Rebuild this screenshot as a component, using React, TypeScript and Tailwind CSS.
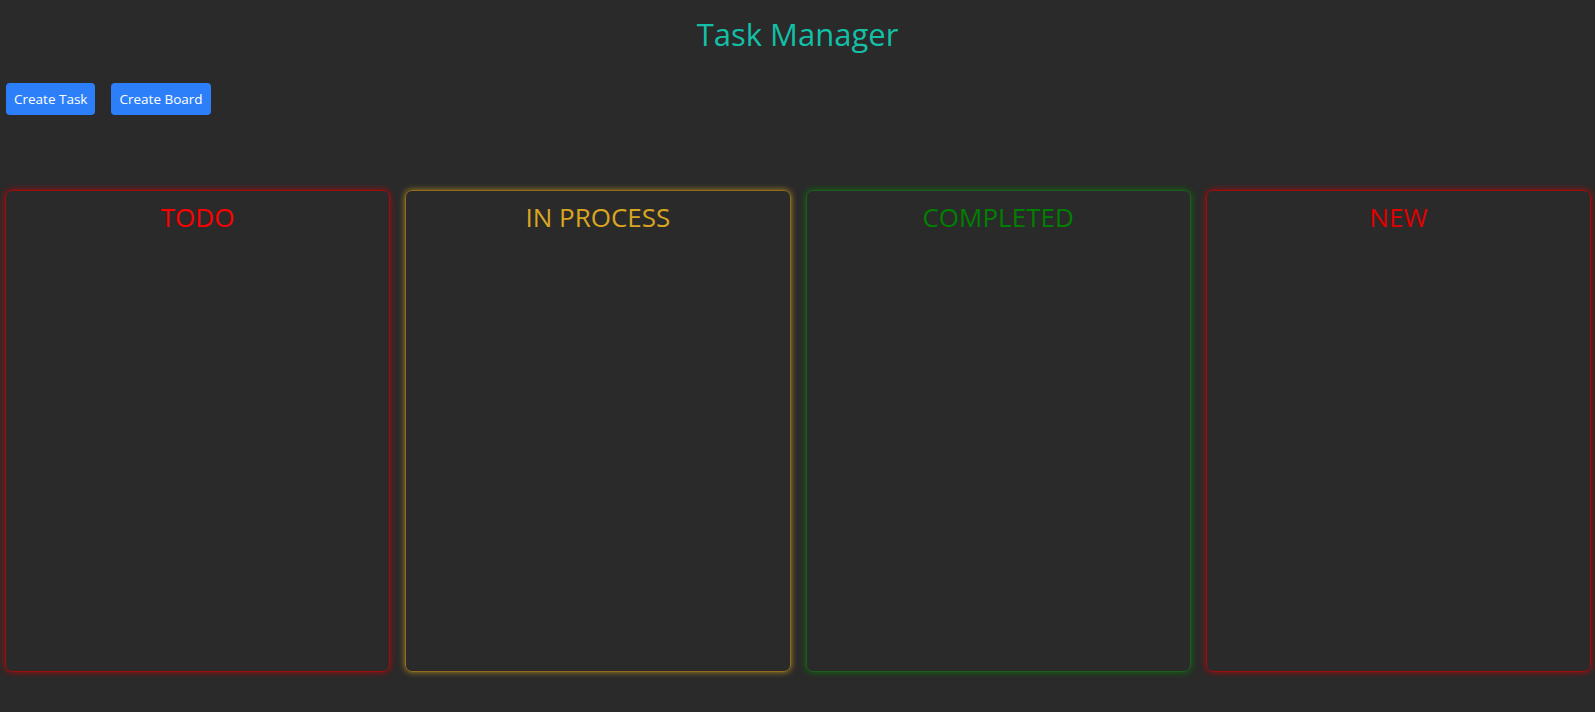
const columns = [
  { title: 'TODO', text: 'text-[#ff0000]', box: 'border-[#9a0e0e] shadow-[0_0_6px_rgba(200,0,0,0.85)]' },
  { title: 'IN PROCESS', text: 'text-[#daa520]', box: 'border-[#8f6d1c] shadow-[0_0_6px_rgba(218,165,32,0.75)]' },
  { title: 'COMPLETED', text: 'text-[#008000]', box: 'border-[#1d5e1d] shadow-[0_0_6px_rgba(0,128,0,0.85)]' },
  { title: 'NEW', text: 'text-[#e00000]', box: 'border-[#9a0e0e] shadow-[0_0_6px_rgba(200,0,0,0.85)]' },
];

export default function App() {
  return (
    <div className="min-h-[712px] w-full bg-[#2a2a2a] font-['Open_Sans',sans-serif]">
      <h1 className="pt-[14px] text-center text-[31px] leading-[40px] text-[#13bfa6]">Task Manager</h1>

      <div className="mt-[29px] flex gap-4 px-[6px]">
        <button className="h-8 rounded-[4px] bg-[#2d7ff9] px-[8px] text-[13.5px] text-white">Create Task</button>
        <button className="h-8 rounded-[4px] bg-[#2d7ff9] px-[8px] text-[13.5px] text-white">Create Board</button>
      </div>

      <div className="mt-[75px] grid grid-cols-4 gap-[15px] pl-[5px] pr-[4px]">
        {columns.map(col => (
          <div key={col.title} className={`h-[482px] rounded-[7px] border ${col.box}`}>
            <h2 className={`pt-[9px] text-center text-[26px] leading-[34px] ${col.text}`}>{col.title}</h2>
          </div>
        ))}
      </div>
    </div>
  );
}
